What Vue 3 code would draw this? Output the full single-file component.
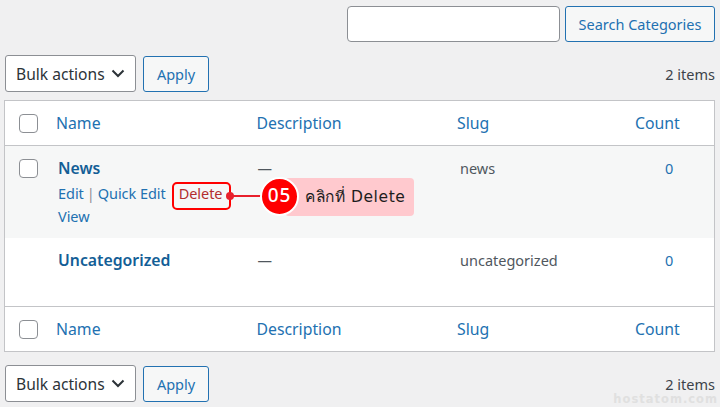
<template>
  <div class="page">
    <div class="search-box">
      <input class="search-input" type="text" />
      <button class="btn search-btn">Search Categories</button>
    </div>

    <div class="tablenav">
      <div class="bulk">
        <span>Bulk actions</span>
        <svg width="14" height="9" viewBox="0 0 14 9"><path d="M1.5 1.5 7 7l5.5-5.5" fill="none" stroke="#2c3338" stroke-width="2" /></svg>
      </div>
      <button class="btn apply">Apply</button>
      <span class="count-text">2 items</span>
    </div>

    <div class="table">
      <div class="row head">
        <div class="cell check"><span class="checkbox"></span></div>
        <div class="cell link">Name</div>
        <div class="cell link">Description</div>
        <div class="cell link">Slug</div>
        <div class="cell link">Count</div>
      </div>

      <div class="row news">
        <div class="cell check"><span class="checkbox"></span></div>
        <div class="cell title-cell">
          <a class="title">News</a>
          <div class="actions">
            <a>Edit</a><span class="sep">|</span><a>Quick Edit</a><a class="delete">Delete</a>
            <br />
            <a>View</a>
          </div>
        </div>
        <div class="cell dash">—</div>
        <div class="cell slug">news</div>
        <div class="cell num">0</div>

        <div class="mark"></div>
        <div class="dot"></div>
        <div class="line"></div>
        <div class="note">คลิกที่ Delete</div>
        <div class="badge">05</div>
      </div>

      <div class="row plain">
        <div class="cell check"></div>
        <div class="cell title-cell"><a class="title">Uncategorized</a></div>
        <div class="cell dash">—</div>
        <div class="cell slug">uncategorized</div>
        <div class="cell num">0</div>
      </div>

      <div class="row foot">
        <div class="cell check"><span class="checkbox"></span></div>
        <div class="cell link">Name</div>
        <div class="cell link">Description</div>
        <div class="cell link">Slug</div>
        <div class="cell link">Count</div>
      </div>
    </div>

    <div class="tablenav bottom">
      <div class="bulk">
        <span>Bulk actions</span>
        <svg width="14" height="9" viewBox="0 0 14 9"><path d="M1.5 1.5 7 7l5.5-5.5" fill="none" stroke="#2c3338" stroke-width="2" /></svg>
      </div>
      <button class="btn apply">Apply</button>
      <span class="count-text">2 items</span>
    </div>

    <div class="watermark">hostatom.com</div>
  </div>
</template>

<script setup>
</script>

<style>
html, body {
  margin: 0;
  background: #f0f0f1;
}
</style>

<style scoped>
.page {
  position: relative;
  width: 720px;
  height: 407px;
  overflow: hidden;
  box-sizing: border-box;
  padding: 6px 5px 0 4px;
  background: #f0f0f1;
  font-family: "Noto Sans", "DejaVu Sans", sans-serif;
  font-size: 14.5px;
  color: #50575e;
}

.search-box {
  display: flex;
  justify-content: flex-end;
  gap: 5px;
  height: 36px;
}

.search-input {
  width: 213px;
  height: 36px;
  box-sizing: border-box;
  border: 1px solid #8c8f94;
  border-radius: 4px;
  background: #fff;
  padding: 0;
}

.btn {
  box-sizing: border-box;
  height: 36px;
  border: 1px solid #2271b1;
  border-radius: 3px;
  background: #f6f7f7;
  color: #2271b1;
  font-family: inherit;
  font-size: 14.5px;
  padding: 0;
}

.search-btn {
  width: 150px;
}

.tablenav {
  display: flex;
  align-items: center;
  height: 37px;
  margin-top: 13px;
  padding-left: 1px;
}

.bulk {
  display: flex;
  align-items: center;
  justify-content: space-between;
  box-sizing: border-box;
  width: 131px;
  height: 37px;
  padding: 0 10px 0 10px;
  border: 1px solid #8c8f94;
  border-radius: 3px;
  background: #fff;
  color: #2c3338;
  font-size: 15.6px;
}

.apply {
  width: 66px;
  margin-left: 7px;
}

.count-text {
  margin-left: auto;
  color: #3c434a;
  font-size: 14.5px;
}

.table {
  margin-top: 8px;
  border: 1px solid #c3c4c7;
  background: #fff;
}

.row {
  position: relative;
  display: grid;
  grid-template-columns: 51px 200.5px 200.5px 178px 80px;
}

.head {
  height: 44px;
  align-items: center;
  border-bottom: 1px solid #c3c4c7;
}

.foot {
  height: 44px;
  align-items: center;
  border-top: 1px solid #c3c4c7;
}

.news {
  height: 92px;
  background: #f6f7f7;
}

.plain {
  height: 68px;
}

.link {
  color: #2271b1;
  font-size: 15.8px;
}

.check {
  padding-left: 14px;
}

.checkbox {
  display: block;
  width: 19px;
  height: 19px;
  box-sizing: border-box;
  border: 1px solid #8c8f94;
  border-radius: 4px;
  background: #fff;
}

.news .check {
  padding-top: 13px;
}

.title-cell {
  padding-left: 2px;
}

.title {
  display: block;
  color: #135e96;
  font-size: 15.8px;
  font-weight: 600;
  line-height: 22px;
  margin-top: 11px;
}

.actions {
  margin-top: 3px;
  color: #2271b1;
  line-height: 23px;
  font-size: 14.5px;
  letter-spacing: -0.05px;
  white-space: nowrap;
}

.sep {
  margin: 0 3px;
  color: #8c8f94;
}

.delete {
  margin-left: 13px;
  color: #b32d2e;
}

.dash {
  padding: 11px 0 0 1px;
  line-height: 22px;
}

.slug {
  padding: 11px 0 0 3px;
  line-height: 22px;
}

.num {
  padding: 11px 0 0 30px;
  line-height: 22px;
  color: #2271b1;
}

/* annotation over the row */
.mark {
  position: absolute;
  left: 167px;
  top: 36px;
  width: 59px;
  height: 28px;
  box-sizing: border-box;
  border: 2px solid #f00;
  border-radius: 5px;
}

.dot {
  position: absolute;
  left: 221px;
  top: 46px;
  width: 8px;
  height: 8px;
  border-radius: 50%;
  background: #e8202c;
}

.line {
  position: absolute;
  left: 226px;
  top: 49px;
  width: 34px;
  height: 2px;
  background: #e8202c;
}

.note {
  position: absolute;
  left: 280px;
  top: 32px;
  width: 129px;
  height: 38px;
  box-sizing: border-box;
  padding-left: 20px;
  border-radius: 4px;
  background: #ffc9ce;
  color: #1d1d1d;
  font-family: "DejaVu Sans", "Noto Sans", sans-serif;
  font-size: 15.5px;
  letter-spacing: 0.6px;
  line-height: 38px;
  white-space: nowrap;
}

.badge {
  position: absolute;
  left: 255px;
  top: 31px;
  width: 39px;
  height: 39px;
  box-sizing: border-box;
  border: 2.5px solid #fff;
  border-radius: 50%;
  background: #f00;
  color: #fff;
  font-size: 19px;
  font-weight: 500;
  line-height: 33px;
  text-align: center;
  letter-spacing: 1px;
}

.bottom {
  margin-top: 13px;
}

.watermark {
  position: absolute;
  right: 2px;
  bottom: 1px;
  color: #e0e0e0;
  font-family: "DejaVu Sans", sans-serif;
  font-size: 11.5px;
  font-weight: 700;
  letter-spacing: 1px;
  line-height: 14px;
}
</style>
